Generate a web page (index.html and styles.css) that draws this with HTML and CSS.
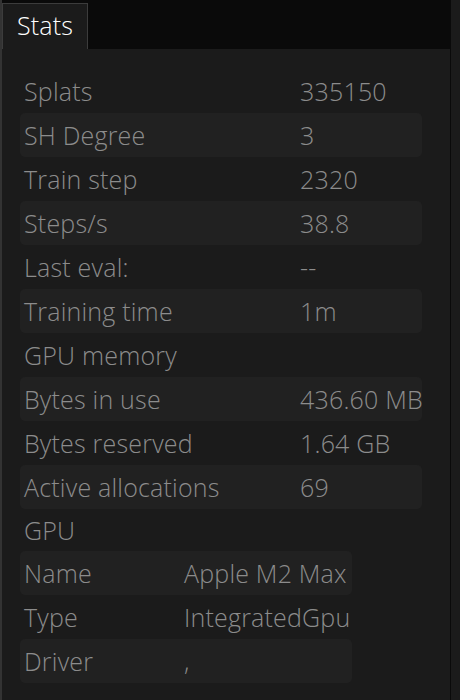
FILE: index.html
```html
<!DOCTYPE html>
<html>
<head>
<meta charset="utf-8">
<link rel="stylesheet" href="styles.css">
</head>
<body>
<div class="app">
  <div class="main">
    <div class="topbar">
      <div class="tab">Stats</div>
    </div>
    <div class="panel">
      <div class="grid grid-wide">
        <div class="row"><span class="k">Splats</span><span class="v">335150</span></div>
        <div class="row striped"><span class="k">SH Degree</span><span class="v">3</span></div>
        <div class="row"><span class="k">Train step</span><span class="v">2320</span></div>
        <div class="row striped"><span class="k">Steps/s</span><span class="v">38.8</span></div>
        <div class="row"><span class="k">Last eval:</span><span class="v">--</span></div>
        <div class="row striped"><span class="k">Training time</span><span class="v">1m</span></div>
        <div class="row"><span class="k">GPU memory</span><span class="v"></span></div>
        <div class="row striped"><span class="k">Bytes in use</span><span class="v">436.60 MB</span></div>
        <div class="row"><span class="k">Bytes reserved</span><span class="v">1.64 GB</span></div>
        <div class="row striped"><span class="k">Active allocations</span><span class="v">69</span></div>
      </div>
      <div class="heading">GPU</div>
      <div class="grid grid-narrow">
        <div class="row striped"><span class="k">Name</span><span class="v">Apple M2 Max</span></div>
        <div class="row"><span class="k">Type</span><span class="v">IntegratedGpu</span></div>
        <div class="row striped"><span class="k">Driver</span><span class="v">,</span></div>
      </div>
    </div>
  </div>
  <div class="side"></div>
</div>
</body>
</html>
```
FILE: styles.css
```css
html, body {
  margin: 0;
  padding: 0;
  background: #1b1b1b;
}
body {
  font-family: "Open Sans", "Noto Sans", sans-serif;
  font-weight: 300;
  font-size: 25px;
  letter-spacing: 0.2px;
  color: #8c8c8c;
}
.app {
  display: flex;
  height: 700px;
  overflow: hidden;
}
.main {
  width: 448px;
  display: flex;
  flex-direction: column;
  border-left: 2px solid #333333;
}
.side {
  flex: 1;
  border-left: 1px solid #0a0a0a;
  background: #1b1b1b;
}
.topbar {
  height: 46px;
  padding-top: 3px;
  background: #0a0a0a;
  display: flex;
  align-items: flex-end;
}
.tab {
  box-sizing: border-box;
  width: 86px;
  height: 46px;
  border: 1px solid #3c3c3c;
  border-bottom: none;
  background: #1b1b1b;
  color: #ffffff;
  display: flex;
  align-items: center;
  justify-content: center;
  padding-bottom: 4px;
}
.panel {
  flex: 1;
  padding: 20px 0 0 18px;
  display: flex;
  flex-direction: column;
}
.grid {
  display: flex;
  flex-direction: column;
}
.grid-wide { width: 402px; }
.grid-narrow { width: 332px; }
.row {
  height: 44px;
  display: grid;
  align-items: center;
  padding-left: 4px;
  border-radius: 5px;
  white-space: nowrap;
  line-height: 44px;
}
.grid-wide .row { grid-template-columns: 276px 1fr; }
.grid-narrow .row { grid-template-columns: 160px 1fr; }
.striped { background: #212121; }
.heading {
  height: 42px;
  line-height: 42px;
  padding-left: 4px;
}
```
